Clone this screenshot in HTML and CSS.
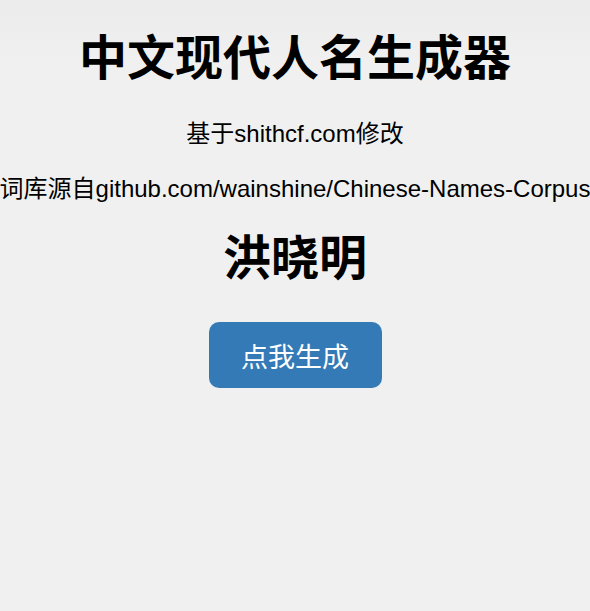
FILE: index.html
```html
<!DOCTYPE html>
<html lang="zh-CN">
<head>
<meta charset="UTF-8">
<meta name="viewport" content="width=device-width, initial-scale=1.0">
<title>中文现代人名生成器</title>
<link rel="stylesheet" href="styles.css">
</head>
<body>

<div class="container">
  <h1 class="title">中文现代人名生成器</h1>
  <p class="info">基于shithcf.com修改</p>
  <p class="info">词库源自github.com/wainshine/Chinese-Names-Corpus</p>
  <h2 class="name" id="name">洪晓明</h2>
  <button type="button" class="gen-btn" id="genBtn">点我生成</button>
</div>

</body>
</html>
```

FILE: styles.css
```css
body {
  font-family: "Liberation Sans", Arial, "Noto Sans CJK SC", sans-serif;
  margin: 0;
  padding: 0;
  background: linear-gradient(#ebebeb, #f0f0f0 60px);
  background-color: #f0f0f0;
  min-height: 100vh;
  color: #000;
}
.container {
  display: flex;
  flex-direction: column;
  align-items: center;
  text-align: center;
  padding-top: 30px;
}
.title {
  font-size: 48px;
  line-height: 58px;
  font-weight: bold;
  margin: 0 0 32px;
}
.info {
  font-size: 24px;
  line-height: 28px;
  margin: 0 0 27px;
  white-space: nowrap;
}
.name {
  font-size: 48px;
  line-height: 58px;
  font-weight: bold;
  margin: 0 0 34px;
}
.gen-btn {
  font-family: inherit;
  width: 173px;
  height: 66px;
  font-size: 27px;
  color: #fff;
  background-color: #337ab7;
  border: none;
  border-radius: 10px;
  cursor: pointer;
}
.gen-btn:hover {
  background-color: #286090;
}
```
